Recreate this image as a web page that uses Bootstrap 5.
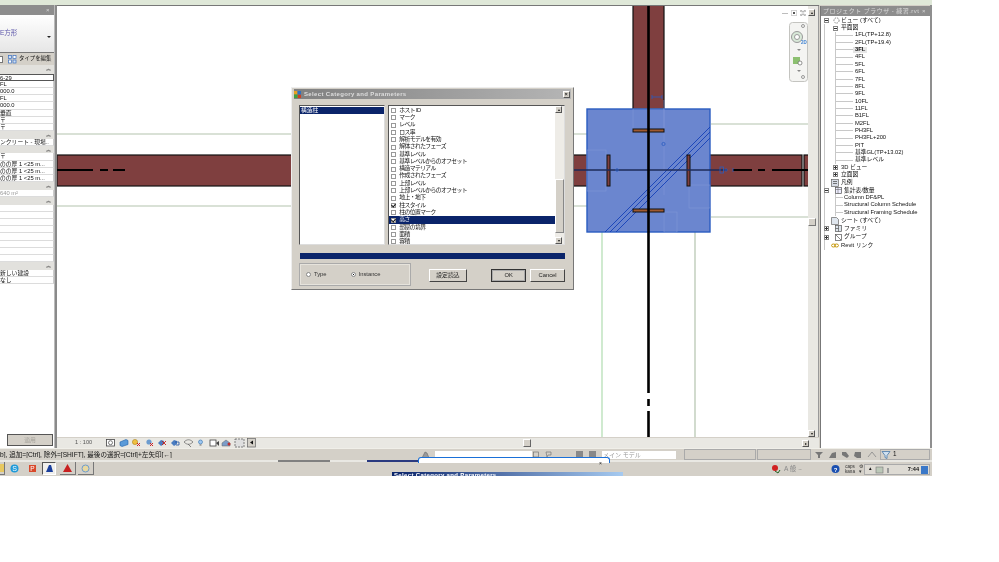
<!DOCTYPE html>
<html lang="ja">
<head>
<meta charset="UTF-8">
<title>Select Category and Parameters</title>
<link href="https://cdn.jsdelivr.net/npm/bootstrap@5.3.0/dist/css/bootstrap.min.css" rel="stylesheet">
<style>
body { background: #fff; margin: 0; overflow: hidden; }
.app-frame { width: 932px; height: 476px; background: #d4d0c8; font: 5.8px/1 "Liberation Sans", "Noto Sans CJK JP", sans-serif; color: #111; filter: blur(.35px); }
.top-strip { height: 5px; background: #dfe8d8; }
.main-row { height: 443px; }
.win-title { height: 10px; background: #8d8d8d; color: #d8d8d8; padding: 0 4px 0 2px; font-size: 6px; letter-spacing: .45px; }

/* properties */
.prop-panel { width: 54px; background: #fff; }
.type-pick { height: 38px; background: linear-gradient(#fff, #e6e6e6); padding: 0 3px 0 0; color: #5a54a8; font-size: 6.5px; border-bottom: 1px solid #777; }
.type-arrow { width: 0; height: 0; border: 2px solid transparent; border-top: 2px solid #222; margin-top: 9px; }
.edit-row { height: 12px; background: #d4d0c8; font-size: 5.4px; gap: 2px; }
.edit-row i { width: 3px; height: 7px; border: 1px solid #777; background: #fff; border-left: 0; margin-right: 3px; }
.sec-head { height: 7.6px; background: #e2e1dd; text-align: right; padding-right: 3px; font-size: 5px; line-height: 7px; color: #333; }
.sec-head.first { height: 8.6px; }
.prop-row { height: 7.2px; background: #fff; border-bottom: 1px solid #dcdcdc; line-height: 6.4px; white-space: nowrap; overflow: hidden; border-right: 1px solid #ccc; }
.prop-row.cur { border: 1px solid #555; border-left: 0; }
.prop-row.off { color: #999; }
.prop-fill { flex: 1; }
.apply-btn { width: 46px; height: 12px; margin: 0 1px 2px 7px; background: #d4d0c8; border: 1px solid #555; color: #a5a29b; text-align: center; line-height: 10px; }
.gutter { width: 3px; background: #8a8a8a; border-left: 1px solid #bbb; }

/* canvas */
.view-col { width: 762px; border-top: 1px solid #777; }
.draw-svg { width: 751px; height: 431px; display: block; background: #fff; }
.v-scroll { width: 11px; background: #e9e8e3; padding: 3px 3px 0 0; border-right: 1px solid #999; }
.sb-btn { width: 7px; height: 7px; background: #d4d0c8; border: 1px solid; border-color: #fff #555 #555 #fff; font-size: 4px; line-height: 5px; text-align: center; color: #111; flex: none; }
.sb-thumb { height: 8px; width: 8px; margin-top: 202px; background: #d4d0c8; border: 1px solid; border-color: #fff #777 #777 #fff; }
.view-bar { height: 11px; background: #e9e8e3; border-top: 1px solid #d4d0c8; }
.scale-lbl { width: 49px; padding-left: 18px; color: #555; font-size: 5.6px; }
.h-track { flex: 1; position: relative; }
.h-thumb { position: absolute; left: 267px; top: 1px; width: 8px; height: 8px; background: #d4d0c8; border: 1px solid; border-color: #fff #666 #666 #fff; }
.grip { width: 10px; background: #e9e8e3; }
.nav-wheel { position: absolute; left: 789px; top: 22px; width: 19px; height: 60px; }
.view-ctl { position: absolute; left: 782px; top: 10px; font-size: 6px; color: #555; gap: 3px; }

/* project browser */
.browser-panel { width: 110px; margin-left: 1px; background: #fff; border-left: 1px solid #777; height: 442px; margin-top: 1px; }
.browser-body { flex: 1; padding-top: 1px; overflow: hidden; }
.browser-edge { width: 2px; background: #8f8f8f; }
.tree-row { height: 7.35px; display: flex; align-items: center; white-space: nowrap; position: relative; }
.tree-row.tall { height: 8.4px; }
.tree-kids-a { margin-left: 3px; border-left: 1px solid #c8c8c8; }
.tree-kids-b { margin-left: 10px; border-left: 1px solid #c8c8c8; }
.tree-row.sub { padding-left: 19px; }
.tree-row.sub::before { content: ""; position: absolute; left: 0; top: 3px; width: 17px; border-top: 1px solid #c8c8c8; }
.tree-row.sch { padding-left: 8px; }
.tree-row.sch::before { content: ""; position: absolute; left: 0; top: 3px; width: 7px; border-top: 1px solid #c8c8c8; }
.tree-box { width: 5px; height: 5px; border: 1px solid #888; background: #fff; position: relative; flex: none; z-index: 1; }
.tree-box::before { content: ""; position: absolute; left: 0; top: 1px; width: 3px; border-top: 1px solid #333; }
.tree-box.plus::after { content: ""; position: absolute; left: 1px; top: 0; height: 3px; border-left: 1px solid #333; }
.box-root { margin-left: 3px; }
.box-lv0 { margin-left: -1px; }
.box-lv1 { margin-left: 8px; margin-right: 3px; }
.ico-root { margin: 0 1px 0 4px; flex: none; }
.ico-gap { margin: 0 2px 0 6px; flex: none; }
.cur-view { font-weight: 700; background: #e6e6e6; padding: 0 2px; margin-left: -2px; }

/* dialog */
.dlg { position: absolute; left: 291px; top: 87px; width: 283px; height: 203px; background: #d4d0c8; border: 1px solid #777; border-top-color: #eee; border-left-color: #eee; padding: 1px 2px 2px; }
.dlg-title { height: 10px; background: linear-gradient(90deg, #808080, #b5b5b5); color: #dedede; font: 700 6px/10px "Liberation Sans", sans-serif; letter-spacing: .35px; padding-right: 1px; }
.dlg-title svg { margin-right: -1px; }
.dlg-x { width: 7px; height: 7px; background: #d4d0c8; border: 1px solid; border-color: #fff #555 #555 #fff; color: #111; font-size: 5px; line-height: 5px; text-align: center; }
.dlg-lists { margin: 6px 6px 0 5px; gap: 3px; height: 140px; }
.list-left { width: 87px; background: #fff; border: 1px solid #555; border-right-color: #ddd; border-bottom-color: #ddd; padding-top: 1px; }
.sel-row { background: #0a246a; color: #fff; height: 6.5px; line-height: 6.5px; padding-left: 1px; }
.list-right { width: 178px; background: #fff; border: 1px solid #555; border-right-color: #ddd; border-bottom-color: #ddd; }
.param-col { flex: 1; padding-top: 1px; overflow: hidden; }
.param-row { height: 7.3px; display: flex; align-items: center; padding-left: 2px; gap: 3px; white-space: nowrap; letter-spacing: -.6px; }
.param-row.on { background: #0a246a; color: #fff; }
.chk { width: 5px; height: 5px; border: 1px solid #999; background: #fff; flex: none; position: relative; }
.chk.yes::after { content: ""; position: absolute; left: 0; top: -1px; width: 3px; height: 4px; border: solid #111; border-width: 0 1px 1px 0; transform: rotate(40deg); }
.list-scroll { width: 9px; background: #eeece7; }
.list-thumb { height: 54px; margin-top: 66px; width: 100%; background: #d4d0c8; border: 1px solid; border-color: #fff #888 #888 #fff; }
.prog-bar { height: 6px; margin: 8px 6px 0 6px; background: #0a246a; }
.dlg-foot { margin: 4px 6px 0 5px; }
.type-box { width: 112px; height: 23px; border: 1px solid #aaa; box-shadow: inset 0 0 0 1px #e6e3dc; gap: 24px; padding-left: 6px; font-size: 5.8px; color: #333; }
.radio-dot { display: inline-block; width: 5px; height: 5px; border: 1px solid #888; border-radius: 50%; background: #fff; margin-right: 3px; position: relative; vertical-align: -1px; }
.radio-dot.yes::after { content: ""; position: absolute; left: 1px; top: 1px; width: 1px; height: 1px; background: #111; }
.win-btn { height: 13px; background: #d4d0c8; border: 1px solid; border-color: #fff #444 #444 #fff; text-align: center; line-height: 11px; color: #222; }
.btn-load { width: 39px; margin: 6px 24px 0 18px; }
.btn-ok { width: 35px; margin: 6px 4px 0 0; border: 1px solid #333; box-shadow: inset 0 0 0 1px #aaa; }
.btn-cancel { width: 35px; margin-top: 6px; }

/* status + taskbar */
.status-row { height: 12px; background: #d4d0c8; border-top: 1px solid #f0efe9; }
.status-text { width: 420px; font-size: 6.6px; white-space: nowrap; overflow: hidden; padding-top: 1px; }
.status-ico { width: 15px; }
.status-white { width: 97px; height: 8px; background: #fff; }
.status-svg { flex: none; }
.status-model { width: 74px; height: 8px; background: #fff; color: #999; font-size: 6px; padding-left: 1px; line-height: 8px; }
.status-field { height: 11px; border: 1px solid #aaa; }
.field-a { width: 72px; margin-left: 8px; }
.field-b { width: 54px; margin-left: 1px; }
.tool-svg { margin-left: 3px; flex: none; }
.field-c { width: 50px; gap: 2px; font-size: 6.3px; }
.seam-row { height: 2px; background: #e9e8e3; }
.seam-a { width: 278px; }
.seam-b { width: 52px; background: #808080; }
.seam-c { width: 37px; }
.seam-d { width: 51px; background: #2a3a80; }
.task-row { height: 14px; background: #d4d0c8; }
.task-slot { height: 13px; display: flex; align-items: center; justify-content: center; flex: none; }
.task-slot.push { background: #f0efec; border: 1px solid; border-color: #555 #fff #fff #555; }
.task-slot.raise { border-right: 1px solid #777; border-bottom: 1px solid #777; }
.slot-a { width: 5px; overflow: hidden; justify-content: flex-end; }
.slot-b { width: 11px; margin-left: 4px; }
.slot-c { width: 11px; margin-left: 7px; }
.slot-d { width: 14px; margin-left: 4px; }
.slot-e { width: 16px; margin-left: 4px; }
.slot-f { width: 16px; margin-left: 2px; }
.tray-red { margin-left: auto; margin-right: 0; flex: none; }
.tray-glyphs { width: 47px; font-size: 6.5px; color: #888; white-space: nowrap; }
.tray-help { flex: none; }
.tray-caps { width: 14px; margin-left: 3px; font-size: 4.6px; line-height: 5px; text-align: center; color: #333; }
.tray-gear { width: 7px; font-size: 4.6px; line-height: 5px; text-align: center; color: #333; }
.tray-box { width: 66px; height: 11px; margin: 2px 2px 0 0; background: #dedbd4; border: 1px solid #aaa; padding: 0 1px 0 3px; font-size: 5.6px; font-weight: 700; gap: 2px; }
.tray-up { font-size: 4.6px; font-weight: 400; }
.tray-time { margin-left: auto; }
.peek-box { position: absolute; left: 418px; top: 457px; width: 192px; height: 6px; background: #fff; border: 1px solid #1a70d8; border-bottom: 0; border-radius: 3px 3px 0 0; }
.peek-x { position: absolute; right: 7px; top: 3px; font-size: 5px; }
.peek-win { position: absolute; left: 392px; top: 472px; width: 231px; height: 4px; overflow: hidden; background: linear-gradient(90deg, #0a246a, #a6caf0); color: #fff; font: 700 6px/6px "Liberation Sans", sans-serif; letter-spacing: .35px; padding-left: 2px; }
</style>
</head>
<body>
<div class="app-frame position-relative d-flex flex-column">
  <div class="top-strip"></div>
  <div class="main-row d-flex">
    <div class="prop-panel d-flex flex-column">
      <div class="win-title d-flex justify-content-end align-items-center"><span>×</span></div>
      <div class="type-pick d-flex justify-content-between align-items-center"><span>E方形</span><span class="type-arrow"></span></div>
      <div class="edit-row d-flex align-items-center">
        <i></i>
        <svg width="9" height="9" viewBox="0 0 9 9"><rect x=".5" y=".5" width="3" height="3" fill="#cfe0f5" stroke="#3a6fc0" stroke-width=".7"/><rect x="5" y=".5" width="3" height="3" fill="#fff" stroke="#3a6fc0" stroke-width=".7"/><rect x=".5" y="5" width="3" height="3" fill="#fff" stroke="#3a6fc0" stroke-width=".7"/><rect x="5" y="5" width="3" height="3" fill="#cfe0f5" stroke="#3a6fc0" stroke-width=".7"/></svg>
        <span>タイプを編集</span>
      </div>
      <div class="sec-head first">︽</div>
      <div class="prop-row cur">6-29</div>
      <div class="prop-row">FL</div>
      <div class="prop-row">000.0</div>
      <div class="prop-row">FL</div>
      <div class="prop-row">000.0</div>
      <div class="prop-row">垂直</div>
      <div class="prop-row">〒</div>
      <div class="prop-row">〒</div>
      <div class="sec-head">︽</div>
      <div class="prop-row">ンクリート - 現場..</div>
      <div class="sec-head">︽</div>
      <div class="prop-row">〒</div>
      <div class="prop-row">のの厚 1 &lt;25 m...</div>
      <div class="prop-row">のの厚 1 &lt;25 m...</div>
      <div class="prop-row">のの厚 1 &lt;25 m...</div>
      <div class="sec-head">︽</div>
      <div class="prop-row off">640 m²</div>
      <div class="sec-head">︽</div>
      <div class="prop-row"></div><div class="prop-row"></div><div class="prop-row"></div><div class="prop-row"></div>
      <div class="prop-row"></div><div class="prop-row"></div><div class="prop-row"></div><div class="prop-row"></div>
      <div class="sec-head">︽</div>
      <div class="prop-row">新しい建設</div>
      <div class="prop-row">なし</div>
      <div class="prop-fill"></div>
      <div class="apply-btn">適用</div>
    </div>
    <div class="gutter"></div>

    <div class="view-col d-flex flex-column">
      <div class="d-flex">
        <svg class="draw-svg" viewBox="57 6 751 431">
          <g stroke="#b4c4ae" stroke-width="1.2" fill="none">
            <path d="M57 134H587M57 206H587M711 124H808M711 217H808M695 232V437"/>
          </g>
          <path d="M602 232V437" stroke="#b0dcb0" stroke-width="1.2"/>
          <g fill="#7f3f3f" stroke="#111" stroke-width="1.2">
            <rect x="57" y="155" width="745" height="31"/>
            <rect x="804" y="155" width="6" height="31"/>
            <rect x="633" y="4" width="31" height="105"/>
          </g>
          <path d="M57 170H93M100 170H108M113 170H125M733 170H752M758 170H765M772 170H808" stroke="#000" stroke-width="2.2"/>
          <rect x="587" y="109" width="123" height="123" fill="#6b86cf" stroke="#2a5cc0" stroke-width="1.4"/>
          <g fill="none" stroke="#7f96d8" stroke-width=".6">
            <rect x="587" y="150" width="19" height="41"/><rect x="633" y="109" width="31" height="21"/>
            <rect x="689" y="185" width="21" height="23"/><rect x="664" y="212" width="13" height="20"/>
            <path d="M664 100V195"/>
          </g>
          <g fill="none" stroke="#1440b8" stroke-width=".9">
            <path d="M605 232L710 127M610 232L710 132M616 232L710 138"/>
          </g>
          <g stroke="#111" stroke-width="1">
            <rect x="633" y="129" width="31" height="3" fill="#a05a30"/>
            <rect x="633" y="209" width="31" height="3" fill="#a05a30"/>
            <rect x="607" y="155" width="3" height="31" fill="#7f3f3f"/>
            <rect x="687" y="155" width="3" height="31" fill="#7f3f3f"/>
          </g>
          <path d="M574 170H727" stroke="#1c2a58" stroke-width="1.4"/>
          <path d="M648.500 6V393M648.500 399V406M648.500 411V437" stroke="#000" stroke-width="2.600"/>
          <g fill="none" stroke="#2a5cc0" stroke-width=".8">
            <circle cx="617" cy="170" r="1.3"/><circle cx="663.500" cy="144" r="1.6"/><circle cx="726" cy="170" r="1.2"/>
            <rect x="720" y="167" width="3.500" height="6"/>
            <path d="M652 97H662M652 95V99M662 95V99M733 168V172"/>
          </g>
        </svg>
        <div class="v-scroll d-flex flex-column">
          <div class="sb-btn">▴</div>
          <div class="sb-thumb"></div>
          <div class="sb-btn mt-auto">▾</div>
        </div>
      </div>
      <div class="view-bar d-flex align-items-center">
        <div class="scale-lbl">1 : 100</div>
        <svg width="150" height="10" viewBox="106 0 150 10">
          <rect x="106.500" y="1.500" width="8" height="6.500" fill="#fff" stroke="#444" stroke-width=".8"/><circle cx="110.500" cy="4.700" r="2" fill="none" stroke="#444" stroke-width=".7"/>
          <path d="M120 4l6-2.500 2 1v4l-6 2-2-1z" fill="#5a9ad8" stroke="#1f5fa8" stroke-width=".6"/>
          <circle cx="135" cy="4" r="2.600" fill="#f0c040" stroke="#a07810" stroke-width=".5"/><path d="M137 5l3 3M140 5l-3 3" stroke="#d02020" stroke-width="1"/>
          <circle cx="149" cy="4" r="2.600" fill="#6c9ccf"/><path d="M150 5l3 3M153 5l-3 3" stroke="#d02020" stroke-width="1"/>
          <path d="M158 5l3-3 3 1v3l-3 2z" fill="#4a7cc0"/><path d="M162 3l4 4M166 3l-4 4" stroke="#c02020" stroke-width=".9"/>
          <path d="M171 5l3-3 3 1v3l-3 2z" fill="#4a7cc0"/><path d="M175 4h4v3h-3" fill="none" stroke="#2050a0" stroke-width=".8"/>
          <path d="M184 4c3-3 6-3 9 0c-3 3-6 3-9 0z" fill="none" stroke="#666" stroke-width=".7"/><path d="M188 6l3 3" stroke="#666" stroke-width=".8"/>
          <circle cx="200.500" cy="4" r="2" fill="#a0c8f0" stroke="#3070b0" stroke-width=".6"/><path d="M199.500 7h2" stroke="#555" stroke-width=".8"/>
          <rect x="210" y="2" width="6" height="6" fill="#fff" stroke="#444" stroke-width=".8"/><path d="M216 5l3-2v5z" fill="#444"/>
          <path d="M222 5l4-3 4 3v3h-8z" fill="#7a9cc8" stroke="#666" stroke-width=".5"/><circle cx="229" cy="6" r="1.500" fill="#c03030"/>
          <rect x="235" y="1" width="9" height="8" fill="#dfdfdf" stroke="#555" stroke-width=".7" stroke-dasharray="2 1"/>
          <rect x="247.500" y=".5" width="8" height="8.500" fill="#d4d0c8" stroke="#666" stroke-width=".7"/><path d="M253 2.500v4l-3-2z" fill="#111"/>
        </svg>
        <div class="h-track align-self-stretch"><div class="h-thumb"></div></div>
        <div class="sb-btn">▸</div>
        <div class="grip"></div>
      </div>
    </div>

    <div class="browser-panel d-flex flex-column">
      <div class="win-title d-flex justify-content-between align-items-center"><span>プロジェクト ブラウザ - 練習.rvt</span><span>×</span></div>
      <div class="browser-body">
        <div class="tree-row">
          <span class="tree-box box-root"></span>
          <svg class="ico-root" width="7" height="7" viewBox="0 0 7 7"><circle cx="3.500" cy="3.500" r="2.600" fill="none" stroke="#555" stroke-width=".7" stroke-dasharray="1.500 1"/></svg>
          <span>ビュー (すべて)</span>
        </div>
        <div class="tree-kids-a">
          <div class="tree-row"><span class="tree-box box-lv1"></span><span>平面図</span></div>
          <div class="tree-kids-b">
            <div class="tree-row sub">1FL(TP+12.8)</div>
            <div class="tree-row sub">2FL(TP+19.4)</div>
            <div class="tree-row sub"><span class="cur-view">3FL</span></div>
            <div class="tree-row sub">4FL</div>
            <div class="tree-row sub">5FL</div>
            <div class="tree-row sub">6FL</div>
            <div class="tree-row sub">7FL</div>
            <div class="tree-row sub">8FL</div>
            <div class="tree-row sub">9FL</div>
            <div class="tree-row sub">10FL</div>
            <div class="tree-row sub">11FL</div>
            <div class="tree-row sub">B1FL</div>
            <div class="tree-row sub">M2FL</div>
            <div class="tree-row sub">PH3FL</div>
            <div class="tree-row sub">PH3FL+200</div>
            <div class="tree-row sub">PIT</div>
            <div class="tree-row sub">基準GL(TP+13.02)</div>
            <div class="tree-row sub">基準レベル</div>
          </div>
          <div class="tree-row"><span class="tree-box plus box-lv1"></span><span>3D ビュー</span></div>
          <div class="tree-row"><span class="tree-box plus box-lv1"></span><span>立面図</span></div>
          <div class="tree-row tall">
            <svg class="ico-gap" width="8" height="8" viewBox="0 0 8 8"><rect x=".5" y=".5" width="7" height="7" fill="#d8dde6" stroke="#666" stroke-width=".7"/><path d="M2 2.500h4M2 4.500h4" stroke="#444" stroke-width=".7"/></svg>
            <span>凡例</span>
          </div>
          <div class="tree-row">
            <span class="tree-box box-lv0"></span>
            <svg class="ico-gap" width="7" height="7" viewBox="0 0 7 7"><rect x=".5" y=".5" width="6" height="6" fill="#eef" stroke="#555" stroke-width=".7"/><path d="M.5 2.500h6M3 .5v6" stroke="#555" stroke-width=".5"/></svg>
            <span>集計表/数量</span>
          </div>
          <div class="tree-kids-b">
            <div class="tree-row sch">Column DF&amp;PL</div>
            <div class="tree-row sch">Structural Column Schedule</div>
            <div class="tree-row sch">Structural Framing Schedule</div>
          </div>
          <div class="tree-row tall">
            <svg class="ico-gap" width="8" height="8" viewBox="0 0 8 8"><path d="M.5.5h5l2 2v5h-7z" fill="#dfe6ee" stroke="#666" stroke-width=".7"/></svg>
            <span>シート (すべて)</span>
          </div>
          <div class="tree-row tall">
            <span class="tree-box plus box-lv0"></span>
            <svg class="ico-gap" width="7" height="7" viewBox="0 0 7 7"><rect x=".5" y=".5" width="6" height="6" fill="#dfe6ee" stroke="#555" stroke-width=".7"/><path d="M3.500.5v6M.5 3.500h3" stroke="#555" stroke-width=".7"/></svg>
            <span>ファミリ</span>
          </div>
          <div class="tree-row tall">
            <span class="tree-box plus box-lv0"></span>
            <svg class="ico-gap" width="7" height="7" viewBox="0 0 7 7"><rect x=".5" y=".5" width="6" height="6" fill="#fff" stroke="#555" stroke-width=".7"/><path d="M1 1l5 5" stroke="#555" stroke-width=".7"/></svg>
            <span>グループ</span>
          </div>
          <div class="tree-row tall">
            <svg class="ico-gap" width="8" height="5" viewBox="0 0 8 5"><ellipse cx="2.500" cy="2.500" rx="2" ry="1.500" fill="none" stroke="#c79a10" stroke-width="1"/><ellipse cx="5.500" cy="2.500" rx="2" ry="1.500" fill="none" stroke="#c79a10" stroke-width="1"/></svg>
            <span>Revit リンク</span>
          </div>
        </div>
      </div>
    </div>
    <div class="browser-edge"></div>
  </div>

  <div class="status-row d-flex align-items-center">
    <div class="status-text">b], 追加=[Ctrl], 除外=[SHIFT], 最後の選択=[Ctrl]+左矢印[←]</div>
    <svg class="status-ico status-svg" height="11" viewBox="0 0 15 11"><path d="M2 9l3-6 2 1 2 5z" fill="#999" stroke="#666" stroke-width=".6"/></svg>
    <div class="status-white"></div>
    <svg class="status-svg" width="70" height="11" viewBox="532 0 70 11"><rect x="533.500" y="3" width="5" height="5" fill="#d4d0c8" stroke="#666" stroke-width=".6"/><path d="M546 3h5v3h-3l-1 2z" fill="none" stroke="#777" stroke-width=".7"/><rect x="576" y="2" width="7" height="7" fill="#888"/><rect x="589" y="2" width="7" height="7" fill="#888"/></svg>
    <div class="status-model">メイン モデル</div>
    <div class="status-field field-a"></div>
    <div class="status-field field-b"></div>
    <svg class="tool-svg" width="66" height="12" viewBox="0 0 66 12"><path d="M1 3h8l-3 3v3H4V6z" fill="#777"/><path d="M15 9l3-5 4-1v6z" fill="#777"/><path d="M28 3h4l3 4-2 2-5-3z" fill="#777"/><path d="M41 3h6v6h-4l-3-2z" fill="#777"/><path d="M54 8l4-5 4 5" fill="none" stroke="#888" stroke-width=".8"/></svg>
    <div class="status-field field-c d-flex align-items-center">
      <svg width="10" height="10" viewBox="0 0 10 10"><path d="M1 1.500h8L6 5.500v3L4 7.500v-2z" fill="#cfe0f0" stroke="#4a78a8" stroke-width=".8"/></svg>
      <span>1</span>
    </div>
  </div>
  <div class="seam-row d-flex"><div class="seam-a"></div><div class="seam-b"></div><div class="seam-c"></div><div class="seam-d"></div></div>

  <div class="task-row d-flex">
    <div class="task-slot raise slot-a"><svg width="6" height="8"><rect width="6" height="8" fill="#e8c860"/></svg></div>
    <div class="task-slot slot-b"><svg width="9" height="9" viewBox="0 0 9 9"><circle cx="4.500" cy="4.500" r="4" fill="#1f9ad8"/><text x="4.500" y="7" font-size="7" text-anchor="middle" fill="#fff" font-family="Liberation Sans">S</text></svg></div>
    <div class="task-slot slot-c"><svg width="9" height="9" viewBox="0 0 9 9"><rect x="1" y="1" width="7" height="7" fill="#d8482a"/><text x="4.500" y="7" font-size="6.500" text-anchor="middle" fill="#fff" font-family="Liberation Sans">P</text></svg></div>
    <div class="task-slot push slot-d"><svg width="9" height="9" viewBox="0 0 9 9"><path d="M1 8L4 1h2l2 7z" fill="#1a3f9c"/></svg></div>
    <div class="task-slot raise slot-e"><svg width="9" height="8" viewBox="0 0 9 8"><path d="M0 8L4.500 0 9 8z" fill="#c82020"/></svg></div>
    <div class="task-slot raise slot-f"><svg width="9" height="9" viewBox="0 0 9 9"><circle cx="4.500" cy="4.500" r="3.500" fill="#e8d8a0" stroke="#6c9ccf"/></svg></div>
    <div class="tray-red d-flex align-items-center"><svg width="14" height="12" viewBox="0 0 14 12"><circle cx="5" cy="5" r="3" fill="#d02020"/><path d="M5 8l3 2 2-3" fill="none" stroke="#206020" stroke-width="1"/></svg></div>
    <div class="tray-glyphs d-flex align-items-center">A 般 ⌣</div>
    <div class="tray-help d-flex align-items-center"><svg width="9" height="10" viewBox="0 0 9 10"><circle cx="4.500" cy="5" r="4" fill="#1a4fb0"/><text x="4.500" y="7.500" font-size="6" text-anchor="middle" fill="#fff" font-family="Liberation Sans" font-weight="700">?</text></svg></div>
    <div class="tray-caps align-self-center">caps<br>kana</div>
    <div class="tray-gear align-self-center">⚙<br>▾</div>
    <div class="tray-box d-flex align-items-center">
      <span class="tray-up">▲</span>
      <svg width="16" height="8" viewBox="0 0 16 8"><rect x="1" y="1" width="7" height="6" fill="#bcc8b8" stroke="#777" stroke-width=".6"/><path d="M12 2h2v5h-2z" fill="#999"/></svg>
      <span class="tray-time">7:44</span>
      <svg width="7" height="8"><rect width="7" height="8" fill="#3a78c8"/></svg>
    </div>
  </div>

  <div class="nav-wheel">
    <svg width="19" height="60" viewBox="0 0 19 60">
      <rect x=".5" y=".5" width="18" height="59" rx="3" fill="#f4f4f2" stroke="#c4c4c0"/>
      <circle cx="14" cy="4" r="1.500" fill="none" stroke="#999"/><circle cx="14" cy="55" r="1.500" fill="none" stroke="#999"/>
      <circle cx="8" cy="15" r="5.500" fill="#d8e8d8" stroke="#9a9a9a"/><circle cx="8" cy="15" r="2.500" fill="#fff" stroke="#9a9a9a"/>
      <text x="12" y="22" font-size="4.500" fill="#3a7fd0" font-family="Liberation Sans" font-weight="700">2D</text>
      <path d="M8 27l2 2 2-2" fill="#888"/>
      <rect x="4" y="35" width="7" height="7" fill="#8cc070"/><circle cx="11" cy="41" r="2" fill="#fff" stroke="#666" stroke-width=".7"/>
      <path d="M8 48l2 2 2-2" fill="#888"/>
    </svg>
  </div>
  <div class="view-ctl d-flex align-items-center"><span>—</span><span>▣</span><span>⌘</span></div>

  <div class="dlg">
    <div class="dlg-title d-flex justify-content-between align-items-center">
      <span class="d-flex align-items-center gap-1"><svg width="7" height="7" viewBox="0 0 7 7"><rect width="3.500" height="3.500" fill="#e8a020"/><rect x="3.500" y="3.500" width="3.500" height="3.500" fill="#d04020"/><rect x="3.500" width="3.500" height="3.500" fill="#3070c0"/><rect y="3.500" width="3.500" height="3.500" fill="#40a040"/></svg>Select Category and Parameters</span>
      <span class="dlg-x">×</span>
    </div>
    <div class="dlg-lists d-flex">
      <div class="list-left"><div class="sel-row">構造柱</div></div>
      <div class="list-right d-flex">
        <div class="param-col">
          <div class="param-row"><span class="chk"></span>ホスト ID</div>
          <div class="param-row"><span class="chk"></span>マーク</div>
          <div class="param-row"><span class="chk"></span>レベル</div>
          <div class="param-row"><span class="chk"></span>ロス率</div>
          <div class="param-row"><span class="chk"></span>解析モデルを有効</div>
          <div class="param-row"><span class="chk"></span>解体されたフェーズ</div>
          <div class="param-row"><span class="chk"></span>基準レベル</div>
          <div class="param-row"><span class="chk"></span>基準レベルからのオフセット</div>
          <div class="param-row"><span class="chk"></span>構造マテリアル</div>
          <div class="param-row"><span class="chk"></span>作成されたフェーズ</div>
          <div class="param-row"><span class="chk"></span>上部レベル</div>
          <div class="param-row"><span class="chk"></span>上部レベルからのオフセット</div>
          <div class="param-row"><span class="chk"></span>地上・地下</div>
          <div class="param-row"><span class="chk yes"></span>柱スタイル</div>
          <div class="param-row"><span class="chk"></span>柱の位置マーク</div>
          <div class="param-row on"><span class="chk yes"></span>高さ</div>
          <div class="param-row"><span class="chk"></span>部屋の境界</div>
          <div class="param-row"><span class="chk"></span>面積</div>
          <div class="param-row"><span class="chk"></span>容積</div>
        </div>
        <div class="list-scroll d-flex flex-column">
          <div class="sb-btn">▴</div>
          <div class="list-thumb"></div>
          <div class="sb-btn mt-auto">▾</div>
        </div>
      </div>
    </div>
    <div class="prog-bar"></div>
    <div class="dlg-foot d-flex">
      <div class="type-box d-flex align-items-center">
        <span><span class="radio-dot"></span>Type</span>
        <span><span class="radio-dot yes"></span>Instance</span>
      </div>
      <div class="win-btn btn-load">設定読込</div>
      <div class="win-btn btn-ok">OK</div>
      <div class="win-btn btn-cancel">Cancel</div>
    </div>
  </div>

  <div class="peek-box"><span class="peek-x">×</span></div>
  <div class="peek-win">Select Category and Parameters</div>
</div>
<script src="https://cdn.jsdelivr.net/npm/bootstrap@5.3.0/dist/js/bootstrap.bundle.min.js"></script>
</body>
</html>
